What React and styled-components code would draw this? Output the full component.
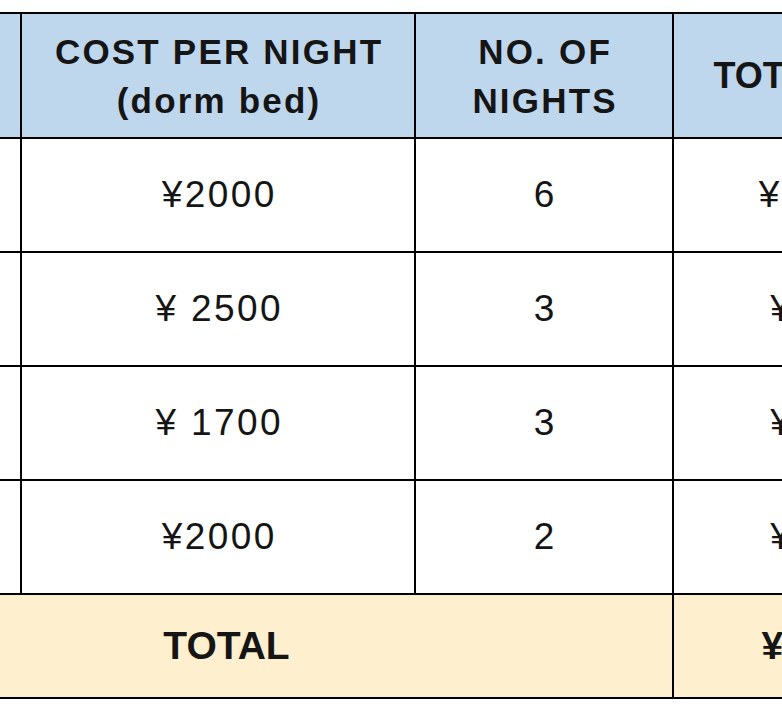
import React from 'react';
import styled, { createGlobalStyle } from 'styled-components';

const Global = createGlobalStyle`
  html, body { margin: 0; padding: 0; background: #ffffff; overflow: hidden; }
  body { font-family: "Liberation Sans", Arial, Helvetica, sans-serif; }
`;

const Viewport = styled.div`
  width: 782px;
  height: 716px;
  overflow: hidden;
  padding-top: 12px;
  box-sizing: border-box;
`;

const Table = styled.table`
  border-collapse: collapse;
  table-layout: fixed;
  margin-left: -221px;
  width: 1200px;
  color: #151515;
`;

const Cell = styled.td`
  border: 2px solid #000;
  padding: 0;
  text-align: center;
  vertical-align: middle;
`;

const HeadCell = styled(Cell).attrs({ as: 'th' })`
  background: #bfd7ed;
  font-weight: 700;
  font-size: ${(p) => (p.$wide ? '36px' : '35px')};
  letter-spacing: ${(p) => (p.$wide ? '0px' : '2.2px')};
  padding-left: ${(p) => (p.$wide ? '0px' : '2.2px')};
  line-height: 49px;
  height: 123px;
`;

const BodyCell = styled(Cell)`
  background: #ffffff;
  font-size: 37px;
  letter-spacing: 2.4px;
  padding-left: 2.4px;
  height: 112px;
`;

const TotalCell = styled(Cell)`
  background: #fef0ce;
  font-weight: 700;
  font-size: 39px;
  height: 102px;
`;

const rows = [
  { place: '', cost: '¥2000', nights: '6', total: '¥12000' },
  { place: '', cost: '¥ 2500', nights: '3', total: '¥7500' },
  { place: '', cost: '¥ 1700', nights: '3', total: '¥5100' },
  { place: '', cost: '¥2000', nights: '2', total: '¥4000' },
];

export default function App() {
  return (
    <Viewport>
      <Global />
      <Table>
        <colgroup>
          <col style={{ width: 241 }} />
          <col style={{ width: 394 }} />
          <col style={{ width: 258 }} />
          <col style={{ width: 307 }} />
        </colgroup>
        <thead>
          <tr>
            <HeadCell>PLACE</HeadCell>
            <HeadCell>COST PER NIGHT<br />(dorm bed)</HeadCell>
            <HeadCell>NO. OF<br />NIGHTS</HeadCell>
            <HeadCell $wide>TOTAL COST</HeadCell>
          </tr>
        </thead>
        <tbody>
          {rows.map((r, i) => (
            <tr key={i}>
              <BodyCell>{r.place}</BodyCell>
              <BodyCell>{r.cost}</BodyCell>
              <BodyCell>{r.nights}</BodyCell>
              <BodyCell>{r.total}</BodyCell>
            </tr>
          ))}
          <tr>
            <TotalCell colSpan={3}>TOTAL</TotalCell>
            <TotalCell>¥28600</TotalCell>
          </tr>
        </tbody>
      </Table>
    </Viewport>
  );
}
